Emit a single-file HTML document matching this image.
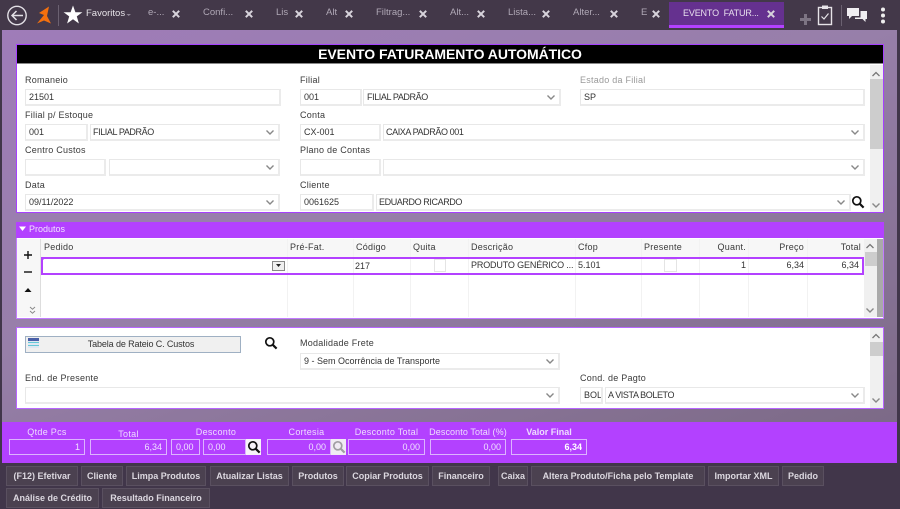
<!DOCTYPE html>
<html lang="pt"><head><meta charset="utf-8"><title>Evento Faturamento Automático</title>
<style>
html,body{margin:0;padding:0}
body{width:900px;height:509px;overflow:hidden;position:relative;background:#41364a;font:9px "Liberation Sans",sans-serif;color:#333}
div,span,svg{position:absolute;box-sizing:border-box;white-space:nowrap}
.t{color:#b0a8b6;top:7px;line-height:12px;font-size:9.5px}
.x{top:8px;width:12px;height:12px}
.p{background:#fff;border:1px solid #a640ff}
.l{line-height:12px;color:#3a3a3a;font-size:9px;letter-spacing:.25px}
.i{background:#fff;border:1px solid #e8e8e8;border-bottom:2px solid #ebebeb;border-right:2px solid #ebebeb;height:17px;line-height:14px;padding-left:6px;color:#333;font-size:9px}
.s{padding-left:2px}
.s svg{right:3px;top:4px;width:10px;height:7px}
.u{letter-spacing:-.4px}
.h{top:241px;line-height:13px;font-size:9px;letter-spacing:.25px;color:#3a3a3a}
.c{top:259px;line-height:13px;font-size:9px;color:#333}
.v{top:239px;width:1px;height:78px;background:#f2f2f2}
.f{top:439px;height:16px;border:1px solid #dcb4ff;color:#f0e2ff;line-height:14px;text-align:right;padding-right:4px;font-size:9px}
.g{top:426px;line-height:12px;color:#eedcff;text-align:center;font-size:9px;letter-spacing:.3px}
.b{height:20px;background:#4b4150;border:1px solid #5a5060;color:#dcd8e0;font-weight:bold;font-size:9px;line-height:18px;text-align:center}
.b1{top:466px}.b2{top:488px}
</style></head><body>
<svg style="display:none" width="0" height="0"><defs>
<symbol id="cl" viewBox="0 0 12 12"><path d="M2.8 2.8L9.2 9.2M9.2 2.8L2.8 9.2" stroke="#d8d4dc" stroke-width="2"/></symbol>
<symbol id="ch" viewBox="0 0 10 7"><path d="M1.5 1.5L5 5L8.5 1.5" fill="none" stroke="#888" stroke-width="1.4"/></symbol>
<symbol id="mg" viewBox="0 0 14 14"><circle cx="5.8" cy="5.8" r="4" fill="none" stroke="#111" stroke-width="1.7"/><path d="M8.8 8.8L12.6 12.6" stroke="#111" stroke-width="2.2"/></symbol>
<symbol id="up" viewBox="0 0 10 7"><path d="M1.5 5L5 1.5L8.5 5" fill="none" stroke="#777" stroke-width="1.3"/></symbol>
</defs></svg>

<!-- top bar -->
<div style="left:0;top:0;width:900px;height:30px;background:#433849"></div>
<svg style="left:6px;top:4px" width="22" height="23" viewBox="0 0 22 23"><circle cx="11" cy="11.5" r="9.2" fill="none" stroke="#e2dfe5" stroke-width="1.4"/><path d="M17 11.5H6M10.5 7L6 11.5L10.5 16" fill="none" stroke="#e2dfe5" stroke-width="1.5"/></svg>
<svg style="left:36px;top:6px" width="16" height="18" viewBox="0 0 16 18"><path d="M13 .5L3 7L8 9L1 17.5L8 14.5L15 17.5L11 10Z" fill="#f4700e"/></svg>
<div style="left:58px;top:5px;width:1px;height:21px;background:#6b6171"></div>
<svg style="left:63px;top:5px" width="20" height="20" viewBox="0 0 20 20"><path d="M10 .5L12.4 7.2H19.4L13.8 11.4L15.9 18.5L10 14.2L4.1 18.5L6.2 11.4L.6 7.2H7.6Z" fill="#fff"/></svg>
<div style="left:86px;top:8px;line-height:12px;color:#e6e3e8;font-size:9.5px">Favoritos</div>
<svg style="left:126px;top:13px" width="6" height="4"><path d="M.5 1H5L2.7 3Z" fill="#8f8696"/></svg>
<div class="t" style="left:148px">e-...</div><svg class="x" style="left:170px"><use href="#cl"/></svg>
<div class="t" style="left:203px">Confi...</div><svg class="x" style="left:243px"><use href="#cl"/></svg>
<div class="t" style="left:276px">Lis</div><svg class="x" style="left:293px"><use href="#cl"/></svg>
<div class="t" style="left:326px">Alt</div><svg class="x" style="left:343px"><use href="#cl"/></svg>
<div class="t" style="left:376px">Filtrag...</div><svg class="x" style="left:417px"><use href="#cl"/></svg>
<div class="t" style="left:450px">Alt...</div><svg class="x" style="left:475px"><use href="#cl"/></svg>
<div class="t" style="left:508px">Lista...</div><svg class="x" style="left:540px"><use href="#cl"/></svg>
<div class="t" style="left:573px">Alter...</div><svg class="x" style="left:608px"><use href="#cl"/></svg>
<div class="t" style="left:641px">E</div><svg class="x" style="left:650px"><use href="#cl"/></svg>
<div style="left:669px;top:2px;width:115px;height:26px;background:#65318f;border-bottom:3px solid #b341ff"></div>
<div style="left:683px;top:7px;line-height:12px;color:#e8e0ee;font-size:9px;letter-spacing:-.15px">EVENTO&nbsp; FATUR...</div>
<svg class="x" style="left:765px"><use href="#cl"/></svg>
<svg style="left:799px;top:13px" width="13" height="13"><path d="M6.5 1V12M1 6.5H12" stroke="#7d7483" stroke-width="3"/></svg>
<svg style="left:817px;top:4px" width="16" height="22" viewBox="0 0 16 22"><rect x="1.5" y="3.5" width="13" height="17" fill="none" stroke="#e6e3e8" stroke-width="1.4"/><rect x="5" y="1.5" width="6" height="3.5" fill="#e6e3e8"/><path d="M4.5 12.5L7 15L11.5 9.5" fill="none" stroke="#e6e3e8" stroke-width="1.2"/></svg>
<div style="left:841px;top:5px;width:1px;height:21px;background:#6b6171"></div>
<svg style="left:846px;top:8px" width="22" height="15" viewBox="0 0 22 15"><path d="M1 0H13V8H6L3 11V8H1Z" fill="#f0eef2"/><path d="M14.5 3H21V11H19.5V14L16.5 11H9V9.5H14.5Z" fill="#f0eef2"/></svg>
<svg style="left:880px;top:7px" width="6" height="17"><circle cx="3" cy="2.5" r="2" fill="#eee"/><circle cx="3" cy="8.5" r="2" fill="#eee"/><circle cx="3" cy="14.5" r="2" fill="#eee"/></svg>

<!-- main background -->
<div style="left:2px;top:30px;width:895px;height:392px;background:linear-gradient(160deg,#9f7cb9 0%,#977fa9 45%,#7c6a87 100%)"></div>

<!-- panel 1 -->
<div class="p" style="left:16px;top:44px;width:868px;height:169px"></div>
<div style="left:17px;top:45px;width:866px;height:19px;background:#000;border-bottom:1px solid #888;color:#fff;font-weight:bold;font-size:14px;letter-spacing:-.05px;line-height:19px;text-align:center">EVENTO FATURAMENTO AUTOMÁTICO</div>
<div class="l" style="left:25px;top:74px">Romaneio</div>
<div class="l" style="left:300px;top:74px">Filial</div>
<div class="l" style="left:580px;top:74px;color:#999">Estado da Filial</div>
<div class="i" style="left:25px;top:89px;width:256px;padding-left:3px">21501</div>
<div class="i" style="left:300px;top:89px;width:62px;padding-left:3px">001</div>
<div class="i s u" style="left:363px;top:89px;width:198px;padding-left:3px">FILIAL PADRÃO<svg viewBox="0 0 10 7"><use href="#ch"/></svg></div>
<div class="i" style="left:580px;top:89px;width:285px;padding-left:3px">SP</div>

<div class="l" style="left:25px;top:109px">Filial p/ Estoque</div>
<div class="l" style="left:300px;top:109px">Conta</div>
<div class="i" style="left:25px;top:124px;width:63px;padding-left:3px">001</div>
<div class="i s u" style="left:90px;top:124px;width:190px">FILIAL PADRÃO<svg viewBox="0 0 10 7"><use href="#ch"/></svg></div>
<div class="i" style="left:300px;top:124px;width:81px;padding-left:3px">CX-001</div>
<div class="i s u" style="left:383px;top:124px;width:482px">CAIXA PADRÃO 001<svg viewBox="0 0 10 7"><use href="#ch"/></svg></div>

<div class="l" style="left:25px;top:144px">Centro Custos</div>
<div class="l" style="left:300px;top:144px">Plano de Contas</div>
<div class="i" style="left:25px;top:159px;width:81px"></div>
<div class="i s" style="left:109px;top:159px;width:171px"><svg viewBox="0 0 10 7"><use href="#ch"/></svg></div>
<div class="i" style="left:300px;top:159px;width:81px"></div>
<div class="i s" style="left:383px;top:159px;width:482px"><svg viewBox="0 0 10 7"><use href="#ch"/></svg></div>

<div class="l" style="left:25px;top:179px">Data</div>
<div class="l" style="left:300px;top:179px">Cliente</div>
<div class="i s" style="left:25px;top:194px;width:255px;padding-left:3px">09/11/2022<svg viewBox="0 0 10 7"><use href="#ch"/></svg></div>
<div class="i" style="left:300px;top:194px;width:74px;padding-left:3px">0061625</div>
<div class="i s u" style="left:376px;top:194px;width:475px">EDUARDO RICARDO<svg viewBox="0 0 10 7"><use href="#ch"/></svg></div>
<svg style="left:851px;top:195px" width="14" height="14"><use href="#mg"/></svg>
<div style="left:870px;top:65px;width:13px;height:147px;background:#f0f0f0"></div>
<div style="left:870px;top:79px;width:13px;height:70px;background:#cdcdcd"></div>
<svg style="left:871px;top:71px" width="10" height="7"><use href="#up"/></svg>
<svg style="left:871px;top:202px" width="10" height="7"><use href="#ch"/></svg>

<!-- produtos -->
<div style="left:16px;top:222px;width:868px;height:97px;background:#fff;border:1px solid #c27bff"></div>
<div style="left:16px;top:222px;width:868px;height:16px;background:#b341ff"></div>
<svg style="left:19px;top:226px" width="8" height="6"><path d="M0 .5H7L3.5 5Z" fill="#fff"/></svg>
<div style="left:29px;top:222px;line-height:15px;color:#f0e2ff;font-size:9px">Produtos</div>
<div style="left:17px;top:239px;width:24px;height:78px;background:#f7f7f7;border-right:1px solid #ddd"></div>
<svg style="left:23px;top:250px" width="10" height="10"><path d="M5 1V9M1 5H9" stroke="#111" stroke-width="1.4"/></svg>
<svg style="left:23px;top:268px" width="10" height="8"><path d="M1 4H9" stroke="#111" stroke-width="1.4"/></svg>
<svg style="left:23px;top:287px" width="10" height="6"><path d="M1.5 5L5 1L8.5 5Z" fill="#111"/></svg>
<svg style="left:29px;top:306px" width="7" height="9"><path d="M1 1L3.5 3.2L6 1M1 5L3.5 7.2L6 5" fill="none" stroke="#888" stroke-width="1"/></svg>
<div style="left:41px;top:239px;width:823px;height:18px;background:#f7f7f7"></div>
<div class="v" style="left:287px"></div><div class="v" style="left:353px"></div><div class="v" style="left:410px"></div><div class="v" style="left:468px"></div><div class="v" style="left:575px"></div><div class="v" style="left:641px"></div><div class="v" style="left:699px"></div><div class="v" style="left:748px"></div><div class="v" style="left:807px"></div>
<div class="h" style="left:44px">Pedido</div>
<div class="h" style="left:290px">Pré-Fat.</div>
<div class="h" style="left:356px">Código</div>
<div class="h" style="left:413px">Quita</div>
<div class="h" style="left:471px">Descrição</div>
<div class="h" style="left:578px">Cfop</div>
<div class="h" style="left:644px">Presente</div>
<div class="h" style="left:700px;width:46px;text-align:right">Quant.</div>
<div class="h" style="left:750px;width:54px;text-align:right">Preço</div>
<div class="h" style="left:810px;width:51px;text-align:right">Total</div>
<div style="left:41px;top:257px;width:823px;height:18px;border:2px solid #b341ff"></div>
<svg style="left:41px;top:258px" width="5" height="5"><path d="M0 0H4L0 4Z" fill="#b341ff"/></svg>
<div style="left:272px;top:261px;width:13px;height:10px;background:#efefef;border:1px solid #888"></div>
<svg style="left:276px;top:264px" width="6" height="4"><path d="M0 0H5L2.5 3Z" fill="#222"/></svg>
<div class="c" style="left:355px;top:260px">217</div>
<div style="left:434px;top:259px;width:12px;height:13px;border:1px solid #e4e4e4;background:#fff"></div>
<div class="c" style="left:471px;letter-spacing:-.15px">PRODUTO GENÉRICO ...</div>
<div class="c" style="left:578px">5.101</div>
<div style="left:664px;top:259px;width:13px;height:13px;border:1px solid #e4e4e4;background:#fff"></div>
<div class="c" style="left:700px;width:46px;text-align:right">1</div>
<div class="c" style="left:750px;width:54px;text-align:right">6,34</div>
<div class="c" style="left:810px;width:49px;text-align:right">6,34</div>
<div style="left:864px;top:239px;width:13px;height:78px;background:#f0f0f0"></div>
<div style="left:877px;top:239px;width:6px;height:78px;background:#aaa"></div>
<div style="left:865px;top:252px;width:12px;height:14px;background:#cdcdcd"></div>
<svg style="left:865px;top:243px" width="10" height="7"><use href="#up"/></svg>
<svg style="left:865px;top:307px" width="10" height="7"><use href="#ch"/></svg>

<!-- panel 3 -->
<div class="p" style="left:16px;top:327px;width:868px;height:82px;border-color:#b866ff"></div>
<div style="left:25px;top:336px;width:216px;height:17px;background:#f0f0f0;border:1px solid #9fb0c3;line-height:15px;text-align:center;color:#333;font-size:9px;letter-spacing:-.12px;padding-left:16px">Tabela de Rateio C. Custos</div>
<svg style="left:28px;top:338px" width="11" height="10"><rect width="11" height="10" fill="#dfe8f2"/><rect width="11" height="3" fill="#4a5fa8"/><rect y="4" width="11" height="1" fill="#66c8d8"/><rect y="7" width="11" height="1" fill="#66c8d8"/></svg>
<svg style="left:264px;top:336px" width="14" height="14"><use href="#mg"/></svg>
<div class="l" style="left:300px;top:337px">Modalidade Frete</div>
<div class="i s" style="left:300px;top:353px;width:260px;padding-left:3px">9 - Sem Ocorrência de Transporte<svg viewBox="0 0 10 7"><use href="#ch"/></svg></div>
<div class="l" style="left:25px;top:372px">End. de Presente</div>
<div class="i s" style="left:25px;top:387px;width:535px"><svg viewBox="0 0 10 7"><use href="#ch"/></svg></div>
<div class="l" style="left:580px;top:372px">Cond. de Pagto</div>
<div class="i" style="left:580px;top:387px;width:23px;padding-left:3px;overflow:hidden">BOL</div>
<div class="i s u" style="left:605px;top:387px;width:260px">A VISTA BOLETO<svg viewBox="0 0 10 7"><use href="#ch"/></svg></div>
<div style="left:870px;top:328px;width:13px;height:80px;background:#f0f0f0"></div>
<div style="left:870px;top:342px;width:13px;height:14px;background:#cdcdcd"></div>
<svg style="left:871px;top:333px" width="10" height="7"><use href="#up"/></svg>
<svg style="left:871px;top:397px" width="10" height="7"><use href="#ch"/></svg>

<!-- totals -->
<div style="left:2px;top:422px;width:895px;height:41px;background:#b341ff"></div>
<div class="g" style="left:9px;width:76px">Qtde Pcs</div>
<div class="g" style="left:90px;width:77px;top:428px">Total</div>
<div class="g" style="left:171px;width:90px">Desconto</div>
<div class="g" style="left:267px;width:79px">Cortesia</div>
<div class="g" style="left:348px;width:77px">Desconto Total</div>
<div class="g" style="left:428px;width:80px;letter-spacing:.1px">Desconto Total (%)</div>
<div class="g" style="left:511px;width:76px;font-weight:bold;letter-spacing:0">Valor Final</div>
<div class="f" style="left:9px;width:76px">1</div>
<div class="f" style="left:90px;width:77px">6,34</div>
<div class="f" style="left:171px;width:29px;text-align:left;padding-left:4px">0,00</div>
<div class="f" style="left:203px;width:43px;text-align:left;padding-left:4px">0,00</div>
<div style="left:246px;top:439px;width:15px;height:16px;background:#f7f3fa"></div>
<svg style="left:247px;top:440px" width="14" height="14"><use href="#mg"/></svg>
<div class="f" style="left:267px;width:64px">0,00</div>
<div style="left:331px;top:439px;width:15px;height:16px;background:#f0ebf3"></div>
<svg style="left:332px;top:440px;opacity:.35" width="14" height="14"><use href="#mg"/></svg>
<div class="f" style="left:348px;width:77px">0,00</div>
<div class="f" style="left:430px;width:76px">0,00</div>
<div class="f" style="left:511px;width:76px;font-weight:bold;color:#fff">6,34</div>

<!-- buttons -->
<div class="b b1" style="left:6px;width:72px">(F12) Efetivar</div>
<div class="b b1" style="left:81px;width:42px">Cliente</div>
<div class="b b1" style="left:126px;width:80px">Limpa Produtos</div>
<div class="b b1" style="left:210px;width:79px">Atualizar Listas</div>
<div class="b b1" style="left:292px;width:52px">Produtos</div>
<div class="b b1" style="left:346px;width:83px">Copiar Produtos</div>
<div class="b b1" style="left:432px;width:58px">Financeiro</div>
<div class="b b1" style="left:498px;width:30px">Caixa</div>
<div class="b b1" style="left:531px;width:174px">Altera Produto/Ficha pelo Template</div>
<div class="b b1" style="left:708px;width:71px">Importar XML</div>
<div class="b b1" style="left:782px;width:42px">Pedido</div>
<div class="b b2" style="left:6px;width:93px">Análise de Crédito</div>
<div class="b b2" style="left:102px;width:108px">Resultado Financeiro</div>
</body></html>
